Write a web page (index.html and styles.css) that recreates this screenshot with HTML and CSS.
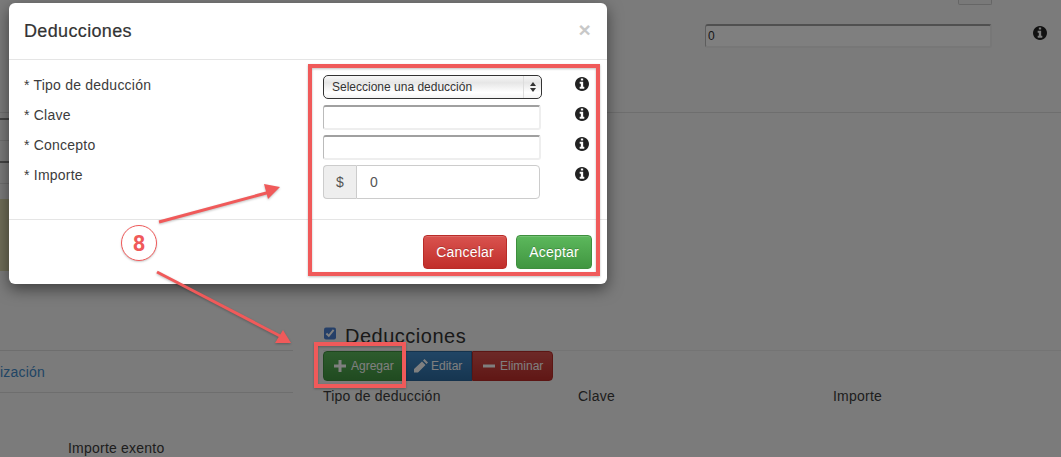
FILE: index.html
```html
<!DOCTYPE html>
<html lang="es">
<head>
<meta charset="utf-8">
<title>Deducciones</title>
<link rel="stylesheet" href="styles.css">
</head>
<body>
<svg class="sprite" aria-hidden="true">
  <symbol id="info" viewBox="0 128 1536 1536"><path d="M1024 1376v-160q0-14-9-23t-23-9h-96v-512q0-14-9-23t-23-9h-320q-14 0-23 9t-9 23v160q0 14 9 23t23 9h96v320h-96q-14 0-23 9t-9 23v160q0 14 9 23t23 9h448q14 0 23-9t9-23zm-128-896v-160q0-14-9-23t-23-9h-192q-14 0-23 9t-9 23v160q0 14 9 23t23 9h192q14 0 23-9t9-23zm640 416q0 209-103 385.5t-279.5 279.5-385.5 103-385.5-103-279.5-279.5-103-385.5 103-385.5 279.5-279.5 385.5-103 385.5 103 279.5 279.5 103 385.5z"/></symbol>
</svg>
<div class="page">
  <div class="tab-stub"></div>
  <div class="top-row">
    <input class="inset-input bg-input" type="text" value="0">
    <svg class="info bg-info"><use href="#info"/></svg>
  </div>
  <div class="divider"></div>
  <div class="columns">
    <aside class="side">
      <div class="stub stub-a"></div>
      <div class="stub-faint stub-f1"></div>
      <div class="stub stub-b"></div>
      <div class="stub-faint stub-f2"></div>
      <div class="alert-stub"></div>
      <div class="side-link"><a href="#">ización</a></div>
      <div class="side-label">Importe exento</div>
    </aside>
    <section class="deductions">
      <div class="ded-head">
        <input class="ded-check" type="checkbox" checked>
        <h2 class="ded-title">Deducciones</h2>
      </div>
      <div class="btn-group">
        <button class="tool tool-add" type="button">
          <svg class="tool-icon" viewBox="0 0 12 12"><path d="M4.5 0h3v4.500h4.500v3h-4.500v4.500h-3v-4.500h-4.500v-3h4.500z"/></svg>Agregar
        </button>
        <button class="tool tool-edit" type="button">
          <svg class="tool-icon tool-icon-lg" viewBox="0 0 14 14"><path d="M10.500 0l3.500 3.500-1.500 1.500-3.500-3.500zM8 2.500l3.500 3.500-7.500 7.500h-4v-3.500z"/></svg>Editar
        </button>
        <button class="tool tool-del" type="button">
          <svg class="tool-icon" viewBox="0 0 12 12"><path d="M0 4.500h12v3h-12z"/></svg>Eliminar
        </button>
      </div>
      <div class="ded-table">
        <span>Tipo de deducción</span><span>Clave</span><span>Importe</span>
      </div>
    </section>
  </div>

  <div class="backdrop"></div>

  <div class="modal">
    <header class="modal-head">
      <h1 class="modal-title">Deducciones</h1>
      <span class="modal-close">×</span>
    </header>
    <div class="modal-body">
      <div class="form-row">
        <label class="form-label">* Tipo de deducción</label>
        <div class="form-control select-wrap">
          <select class="select"><option>Seleccione una deducción</option></select>
          <span class="select-arrows"></span>
        </div>
        <svg class="info"><use href="#info"/></svg>
      </div>
      <div class="form-row">
        <label class="form-label">* Clave</label>
        <div class="form-control"><input class="inset-input" type="text"></div>
        <svg class="info"><use href="#info"/></svg>
      </div>
      <div class="form-row">
        <label class="form-label">* Concepto</label>
        <div class="form-control"><input class="inset-input" type="text"></div>
        <svg class="info"><use href="#info"/></svg>
      </div>
      <div class="form-row form-row-last">
        <label class="form-label">* Importe</label>
        <div class="form-control input-group">
          <span class="addon">$</span>
          <input class="group-input" type="text" value="0">
        </div>
        <svg class="info"><use href="#info"/></svg>
      </div>
    </div>
    <footer class="modal-foot">
      <button class="btn btn-cancel" type="button">Cancelar</button>
      <button class="btn btn-accept" type="button">Aceptar</button>
    </footer>
  </div>

  <svg class="annotations" viewBox="0 0 1061 457">
    <g class="note-shadow">
      <rect class="note-box" x="310" y="66" width="288" height="208"/>
      <rect class="note-box" x="316" y="344" width="88" height="42"/>
      <path class="note-line" d="M159 222L270 192"/>
      <path class="note-head" d="M280 187L264 184L268 199z"/>
      <path class="note-line" d="M157 272L282 337"/>
      <path class="note-head" d="M291 343L275 343L283 330z"/>
    </g>
  </svg>
  <div class="step-badge">8</div>
</div>
</body>
</html>
```
FILE: styles.css
```css
* { box-sizing: border-box; }
html, body { margin: 0; padding: 0; }
body { font-family: "Liberation Sans", Arial, sans-serif; font-size: 14px; letter-spacing: .22px; color: #3c3c3c; background: #f6f6f6; }
.sprite { display: none; }

.page { position: relative; width: 1061px; height: 457px; overflow: hidden; background: #f6f6f6; }

.backdrop { position: absolute; inset: 0; background: rgba(0, 0, 0, .5); }

/* page behind the dialog */
.tab-stub { width: 34px; height: 5px; margin-left: 958px; background: #f2f2f2; border: 1px solid #ccc; border-top: 0; border-radius: 0 0 2px 2px; }
.top-row { display: flex; align-items: center; margin: 19px 0 0 705px; height: 24px; }
.inset-input { display: block; width: 100%; height: 25px; padding: 0 2px; font: 12px "Liberation Sans", Arial, sans-serif; color: #333; background: #fff; border-style: solid; border-color: #a0a0a0 #eee #eee #bbb; border-width: 2px 2px 2px 1px; border-radius: 3px; }
.bg-input { width: 287px; height: 24px; flex: none; }
.bg-info { margin: -6px 0 0 41px; }
.info { display: block; width: 14px; height: 14px; flex: none; fill: #222; }
.divider { height: 1px; margin-top: 64px; background: #ddd; }

.columns { display: flex; }
.side { width: 293px; flex: none; }
.stub { height: 2px; width: 9px; background: #888; }
.stub-faint { height: 1px; width: 9px; background: #ddd; }
.stub-a { margin-top: 5px; }
.stub-f1 { margin-top: 20px; }
.stub-b { margin-top: 20px; }
.stub-f2 { margin-top: 20px; }
.alert-stub { width: 9px; height: 72px; margin-top: 15px; background: #dfdab0; }
.side-link { height: 43px; margin-top: 79px; padding-top: 11px; line-height: 20px; border-top: 1px solid #ddd; border-bottom: 1px solid #ddd; }
.side-link a { color: #428bca; text-decoration: none; }
.side-label { margin: 45px 0 0 68px; line-height: 20px; }

.deductions { flex: 1; padding: 209px 0 0 30px; }
.ded-head { display: flex; align-items: center; height: 29px; border-bottom: 1px solid #e8e8e8; }
.ded-check { width: 12px; height: 13px; margin: 0 9px 6px 1px; accent-color: #4a7fd0; }
.ded-title { margin: 0 0 1px; font-size: 20px; font-weight: 400; line-height: 28px; letter-spacing: .5px; color: #333; }
.btn-group { display: flex; width: 230px; }
.tool { display: flex; align-items: center; height: 30px; padding: 0 10px; font: 12px "Liberation Sans", Arial, sans-serif; color: #fff; border: 1px solid; cursor: pointer; }
.tool-icon { width: 12px; height: 12px; margin-right: 5px; fill: #fff; flex: none; }
.tool-icon-lg { width: 14px; height: 14px; margin-right: 3px; }
.tool-add { width: 82px; background: linear-gradient(#5cb85c, #419641); border-color: #3e8f3e; border-radius: 4px 0 0 4px; }
.tool-edit { width: 67px; padding-left: 8px; background: linear-gradient(#428bca, #2d6ca2); border-color: #2b669a; }
.tool-del { width: 81px; background: linear-gradient(#d9534f, #c12e2a); border-color: #b92c28; border-radius: 0 4px 4px 0; }
.ded-table { display: grid; grid-template-columns: 255px 255px 1fr; margin-top: 5px; line-height: 20px; }

/* dialog */
.modal { position: absolute; left: 9px; top: 3px; width: 598px; height: 281px; background: #fff; border-radius: 6px; box-shadow: 0 5px 15px rgba(0, 0, 0, .5); }
.modal-head { display: flex; justify-content: space-between; align-items: center; height: 57px; padding: 1px 15px 0; border-bottom: 1px solid #e5e5e5; }
.modal-title { margin: 0; font-size: 18px; font-weight: 400; letter-spacing: .35px; color: #333; -webkit-text-stroke: .2px #333; }
.modal-close { font-size: 21px; font-weight: 700; line-height: 1; color: #c8c8c8; margin: -4px 1px 0 0; }
.modal-body { padding-top: 15px; height: 160px; border-bottom: 1px solid #e5e5e5; }
.form-row { display: flex; align-items: flex-start; height: 30px; }
.form-row-last { height: 54px; }
.form-label { width: 314px; padding-left: 15px; line-height: 20px; flex: none; }
.form-control { width: 219px; flex: none; }
.form-row .info { margin: 2px 0 0 33px; }
.select-wrap { position: relative; height: 24px; }
.select { display: block; width: 100%; height: 24px; padding: 0 24px 0 8px; font: 12px "Liberation Sans", Arial, sans-serif; color: #333; appearance: none; border: 1px solid #333; border-radius: 5px; background: linear-gradient(#f8f8f8, #e6e6e6 30%, #fff 75%, #f4f4f4); }
.select-arrows { position: absolute; right: 0; top: 1px; width: 19px; height: 22px; border-left: 1px solid #ddd; }
.select-arrows::before, .select-arrows::after { content: ""; position: absolute; left: 6px; border-left: 3px solid transparent; border-right: 3px solid transparent; }
.select-arrows::before { top: 6px; border-bottom: 4px solid #333; }
.select-arrows::after { top: 12px; border-top: 4px solid #333; }
.form-control .inset-input { width: 218px; }
.input-group { display: flex; height: 34px; padding-right: 2px; }
.addon { width: 33px; flex: none; display: flex; align-items: center; justify-content: center; color: #555; background: #eee; border: 1px solid #ccc; border-right: 0; border-radius: 4px 0 0 4px; }
.group-input { flex: 1; min-width: 0; padding: 0 13px; font: 14px "Liberation Sans", Arial, sans-serif; color: #555; border: 1px solid #ccc; border-radius: 0 4px 4px 0; }
.modal-foot { display: flex; justify-content: flex-end; gap: 9px; padding: 15px 15px 0 0; }
.btn { height: 34px; padding: 0; font: 14px "Liberation Sans", Arial, sans-serif; letter-spacing: .2px; color: #fff; text-shadow: 0 -1px 0 rgba(0, 0, 0, .2); border: 1px solid; border-radius: 4px; box-shadow: inset 0 1px 0 rgba(255, 255, 255, .15); }
.btn-cancel { width: 84px; background: linear-gradient(#d9534f, #c12e2a); border-color: #b92c28; }
.btn-accept { width: 76px; background: linear-gradient(#5cb85c, #419641); border-color: #3e8f3e; }

/* annotations */
.annotations { position: absolute; inset: 0; width: 1061px; height: 457px; pointer-events: none; }
.note-shadow { filter: drop-shadow(0 1px 1px rgba(0, 0, 0, .25)); }
.note-box { fill: none; stroke: #f05a5a; stroke-width: 4; }
.note-line { fill: none; stroke: #f05a5a; stroke-width: 3; }
.note-head { fill: #f05a5a; }
.step-badge { position: absolute; left: 121px; top: 225px; width: 36px; height: 36px; display: flex; align-items: center; justify-content: center; font: 700 22px Roboto, sans-serif; letter-spacing: 0; color: #f05a5a; background: #fff; border: 1px solid #f05a5a; border-radius: 50%; box-shadow: 0 1px 2px rgba(0, 0, 0, .2); }
```
